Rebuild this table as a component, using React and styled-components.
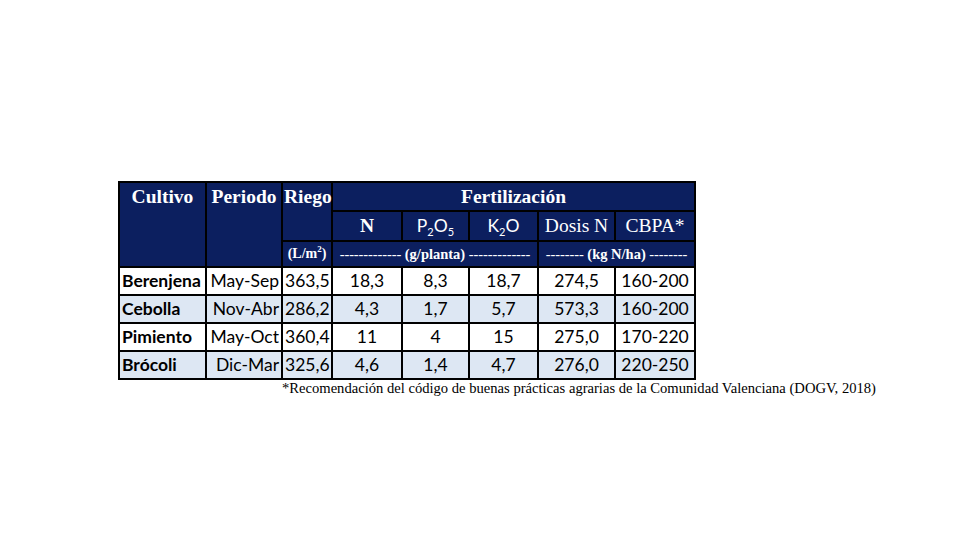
import React from 'react';
import styled, { createGlobalStyle } from 'styled-components';

const GlobalStyle = createGlobalStyle`
  html, body {
    margin: 0;
    padding: 0;
    background: #ffffff;
  }
  body {
    width: 980px;
    height: 560px;
    overflow: hidden;
  }
`;

const Page = styled.div`
  display: flex;
  flex-direction: column;
  align-items: flex-start;
  padding: 181px 0 0 118px;
`;

const Table = styled.table`
  border-collapse: collapse;
  table-layout: fixed;
  width: 576px;
  color: #000;
`;

const HeadCell = styled.th`
  background: #0c1f5f;
  color: #ffffff;
  border: 2px solid #000;
  padding: 0 1px;
  height: ${p => p.$h}px;
  vertical-align: ${p => p.$top ? 'top' : 'middle'};
  text-align: center;
  font-family: ${p => p.$sans ? '"Lato", "Open Sans", sans-serif' : '"Liberation Serif", "Times New Roman", serif'};
  font-size: ${p => p.$size || 19.5}px;
  font-weight: ${p => p.$bold ? 700 : 400};
  line-height: ${p => p.$top ? '27px' : 1};
  white-space: nowrap;
`;

const Sub = styled.sub`
  font-size: 11px;
  line-height: 0;
  vertical-align: -4px;
`;

const Sup = styled.sup`
  font-size: 9px;
  line-height: 0;
  vertical-align: 6px;
`;

const Dashes = styled.span`
  font-weight: 400;
  letter-spacing: -0.1px;
`;

const Row = styled.tr`
  background: ${p => p.$alt ? '#dde7f3' : '#ffffff'};
`;

const Cell = styled.td`
  border: 2px solid #000;
  height: 26px;
  padding: ${p => p.$align === 'left' ? '0 0 0 2px' : '0 2px'};
  text-align: ${p => p.$align || 'center'};
  font-family: "Lato", "Open Sans", sans-serif;
  font-size: 17.5px;
  font-weight: ${p => p.$bold ? 700 : 400};
  white-space: nowrap;
  line-height: 1;
`;

const Note = styled.p`
  margin: 0 0 0 164px;
  font-family: "Liberation Serif", "Times New Roman", serif;
  font-size: 14.6px;
  line-height: 1.2;
  white-space: nowrap;
`;

const widths = [87, 76, 50, 70, 67, 69, 77, 80];

const rows = [
  ['Berenjena', 'May-Sep', '363,5', '18,3', '8,3', '18,7', '274,5', '160-200'],
  ['Cebolla', 'Nov-Abr', '286,2', '4,3', '1,7', '5,7', '573,3', '160-200'],
  ['Pimiento', 'May-Oct', '360,4', '11', '4', '15', '275,0', '170-220'],
  ['Brócoli', 'Dic-Mar', '325,6', '4,6', '1,4', '4,7', '276,0', '220-250'],
];

export default function App() {
  return (
    <Page>
      <GlobalStyle />
      <Table>
        <colgroup>
          {widths.map((w, i) => <col key={i} style={{ width: w }} />)}
        </colgroup>
        <thead>
          <tr>
            <HeadCell rowSpan={3} $top $bold $h={27}>Cultivo</HeadCell>
            <HeadCell rowSpan={3} $top $bold $h={27}>Periodo</HeadCell>
            <HeadCell rowSpan={2} $top $bold $h={27}>Riego</HeadCell>
            <HeadCell colSpan={5} $bold $h={27}>Fertilización</HeadCell>
          </tr>
          <tr>
            <HeadCell $bold $h={28}>N</HeadCell>
            <HeadCell $sans $size={17.5} $h={28}>P<Sub>2</Sub>O<Sub>5</Sub></HeadCell>
            <HeadCell $sans $size={17.5} $h={28}>K<Sub>2</Sub>O</HeadCell>
            <HeadCell $h={28}>Dosis N</HeadCell>
            <HeadCell $h={28}>CBPA*</HeadCell>
          </tr>
          <tr>
            <HeadCell $bold $size={14} $h={24}>(L/m<Sup>2</Sup>)</HeadCell>
            <HeadCell colSpan={3} $bold $size={14.5} $h={24}>
              <Dashes>-------------</Dashes> (g/planta) <Dashes>-------------</Dashes>
            </HeadCell>
            <HeadCell colSpan={2} $bold $size={14.5} $h={24}>
              <Dashes>--------</Dashes> (kg N/ha) <Dashes>--------</Dashes>
            </HeadCell>
          </tr>
        </thead>
        <tbody>
          {rows.map((r, i) => (
            <Row key={r[0]} $alt={i % 2 === 1}>
              <Cell $align="left" $bold>{r[0]}</Cell>
              <Cell $align="right">{r[1]}</Cell>
              {r.slice(2).map((v, j) => <Cell key={j}>{v}</Cell>)}
            </Row>
          ))}
        </tbody>
      </Table>
      <Note>*Recomendación del código de buenas prácticas agrarias de la Comunidad Valenciana (DOGV, 2018)</Note>
    </Page>
  );
}
